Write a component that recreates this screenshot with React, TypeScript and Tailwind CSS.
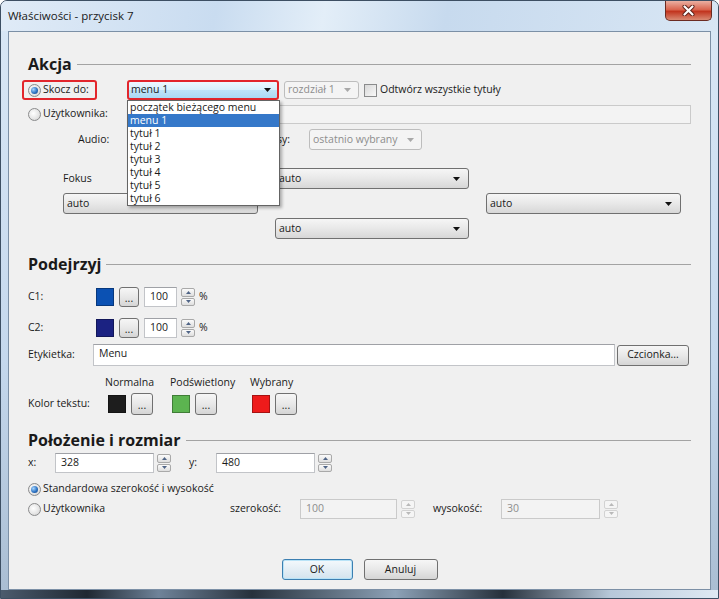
import React from "react";

const listItems = ["początek bieżącego menu", "menu 1", "tytuł 1", "tytuł 2", "tytuł 3", "tytuł 4", "tytuł 5", "tytuł 6"];

function Radio({ checked }: { checked?: boolean }) {
  return (
    <span className="flex h-[13px] w-[13px] shrink-0 items-center justify-center rounded-full border border-[#8a8b8c] bg-[radial-gradient(circle_at_40%_40%,#ffffff,#e4e4e4_60%,#c9c9c9)]">
      {checked && (
        <span className="h-[7px] w-[7px] rounded-full bg-[radial-gradient(circle_at_35%_35%,#a6d6ff,#2e74c4_55%,#143f7c)]" />
      )}
    </span>
  );
}

function Arrow({ color }: { color: string }) {
  return (
    <svg width="7" height="4" viewBox="0 0 7 4" className="shrink-0">
      <path d="M0 0H7L3.5 4Z" fill={color} />
    </svg>
  );
}

function Combo({ value, disabled, focus }: { value: string; disabled?: boolean; focus?: boolean }) {
  const box = focus
    ? "border-2 border-[#e2262c] bg-[linear-gradient(180deg,#eef8fe,#d6effc_50%,#bfe4f9_50%,#aad9f4)] pl-[2px] pr-[6px]"
    : disabled
      ? "border border-[#bdbdbd] bg-[#f4f4f4] text-[#8d8d8d] pl-[3px] pr-[7px]"
      : "border border-[#707070] bg-[linear-gradient(180deg,#f6f6f6,#e8e8e8_50%,#d7d7d7)] pl-[3px] pr-[8px]";
  return (
    <div className={`flex h-full w-full items-center rounded-[3px] ${box}`}>
      <span className="flex-1 whitespace-nowrap">{value}</span>
      <Arrow color={disabled ? "#a9a9a9" : "#111111"} />
    </div>
  );
}

function TextBox({ value, disabled, className }: { value?: string; disabled?: boolean; className?: string }) {
  const box = disabled
    ? "border-[#cacaca] bg-[#f3f3f3] text-[#8d8d8d]"
    : "border-[#c2c4c8] border-t-[#9fa1a6] bg-white";
  return <div className={`flex items-center border pl-[5px] ${box} ${className ?? ""}`}>{value}</div>;
}

function Spin({ disabled, className }: { disabled?: boolean; className?: string }) {
  const btn = disabled ? "border-[#d2d2d2] bg-[#f5f5f5]" : "border-[#a9a9a9] bg-[linear-gradient(180deg,#fbfbfb,#dedede)]";
  const fill = disabled ? "#b9b9b9" : "#4f6486";
  return (
    <div className={`flex h-[18px] w-[14px] flex-col gap-px ${className ?? ""}`}>
      <div className={`flex flex-1 items-center justify-center rounded-[2px] border ${btn}`}>
        <svg width="5" height="3" viewBox="0 0 5 3">
          <path d="M0 3L2.5 0L5 3Z" fill={fill} />
        </svg>
      </div>
      <div className={`flex flex-1 items-center justify-center rounded-[2px] border ${btn}`}>
        <svg width="5" height="3" viewBox="0 0 5 3">
          <path d="M0 0H5L2.5 3Z" fill={fill} />
        </svg>
      </div>
    </div>
  );
}

function Dots({ big, className }: { big?: boolean; className?: string }) {
  return (
    <div
      className={`flex items-center justify-center rounded-[3px] border border-[#707070] bg-[linear-gradient(180deg,#f6f6f6,#e8e8e8_50%,#d5d5d5)] pt-[3px] ${
        big ? "h-[22px] w-[22px]" : "h-[20px] w-[20px]"
      } ${className ?? ""}`}
    >
      ...
    </div>
  );
}

function Swatch({ color }: { color: string }) {
  return <div className="h-[18px] w-[18px] shrink-0 border border-black/30" style={{ backgroundColor: color }} />;
}

function Group({ title, className }: { title: string; className?: string }) {
  return (
    <div className={`flex h-[20px] items-center ${className ?? ""}`}>
      <span className="text-[16px] font-bold leading-[20px] text-[#1a1a1a]">{title}</span>
      <div className="ml-[5px] h-px flex-1 bg-[#a3a3a3]" />
    </div>
  );
}

function CloseButton() {
  return (
    <div className="flex h-[20px] w-[47px] items-center justify-center rounded-b-[5px] border border-t-0 border-[#6b2b22] bg-[linear-gradient(180deg,#eab0a2,#d9654f_45%,#c2351f_55%,#d98a73)]">
      <svg width="13" height="11" viewBox="0 0 13 11">
        <path d="M2.5 1.5L10.5 9.5M10.5 1.5L2.5 9.5" stroke="#5a1f16" strokeWidth="4" strokeLinecap="round" />
        <path d="M2.5 1.5L10.5 9.5M10.5 1.5L2.5 9.5" stroke="#ffffff" strokeWidth="2.2" strokeLinecap="round" />
      </svg>
    </div>
  );
}

export default function App() {
  return (
    <div className="h-[599px] w-[719px] bg-white font-['Open_Sans',sans-serif] text-[10.5px] text-[#1a1a1a]">
      <div className="flex h-full flex-col overflow-hidden rounded-t-[7px] border border-[#3d4f63] bg-[linear-gradient(180deg,#dae8f6,#c5d8ed_60%,#a9bdd2)]">
        <div className="flex h-[30px] shrink-0 items-start justify-between bg-[linear-gradient(100deg,#e0ebf7,#c9dcf0_30%,#e3eef8_45%,#c7daee_62%,#d8e6f4)] pl-[7px] pr-[6px]">
          <span className="mt-[7px] text-[11.5px] leading-[15px] text-[#1a1a1a]">Właściwości - przycisk 7</span>
          <CloseButton />
        </div>

        <div className="mx-[7px] flex flex-1 flex-col border border-[#7c90a6] bg-[#f0f0f0] px-[19px] pt-[22px]">
          <Group title="Akcja" />

          <div className="mt-[6px] flex h-[20px] items-center">
            <div className="-ml-[6px] flex h-[20px] w-[75px] items-center gap-[2px] rounded-[3px] border-2 border-[#e2262c] pl-[4px]">
              <Radio checked />
              <span className="whitespace-nowrap">Skocz do:</span>
            </div>
            <div className="relative ml-[30px] h-[20px] w-[152px]">
              <Combo value="menu 1" focus />
              <div className="absolute left-0 top-full z-10 w-[153px] border border-[#646464] bg-white shadow-[2px_2px_3px_rgba(0,0,0,0.3)]">
                {listItems.map((item) => (
                  <div
                    key={item}
                    className={
                      item === "menu 1"
                        ? "h-[13px] bg-[#3578c9] pl-[2px] leading-[13px] text-white"
                        : "h-[13px] pl-[2px] leading-[13px]"
                    }
                  >
                    {item}
                  </div>
                ))}
              </div>
            </div>
            <div className="ml-[5px] h-[18px] w-[75px]">
              <Combo value="rozdział 1" disabled />
            </div>
            <span className="ml-[5px] h-[13px] w-[13px] border border-[#8a8b8c] bg-[linear-gradient(135deg,#d8d8d8,#f9f9f9)]" />
            <span className="ml-[3px] whitespace-nowrap">Odtwórz wszystkie tytuły</span>
          </div>

          <div className="mt-[4px] flex h-[20px] items-center">
            <Radio />
            <span className="ml-[2px] w-[84px] whitespace-nowrap">Użytkownika:</span>
            <TextBox disabled className="h-[19px] flex-1" />
          </div>

          <div className="mt-[5px] flex h-[21px] items-center">
            <span className="ml-[50px] w-[49px]">Audio:</span>
            {/* audio combo sits under the open list */}
            <div className="h-[20px] w-[118px]">
              <Combo value="" />
            </div>
            <span className="w-[45px] text-right">Napisy:</span>
            <div className="ml-[19px] h-[21px] w-[113px]">
              <Combo value="ostatnio wybrany" disabled />
            </div>
          </div>

          <div className="ml-[35px] mt-[18px] grid grid-cols-[195px_194px_195px] grid-rows-[21px_21px_21px] gap-x-[17px] gap-y-[4px]">
            <div className="flex items-center">Fokus</div>
            <Combo value="auto" />
            <div />
            <Combo value="auto" />
            <div />
            <Combo value="auto" />
            <div />
            <Combo value="auto" />
            <div />
          </div>

          <Group title="Podejrzyj" className="mt-[15px]" />

          <div className="mt-[13px] flex h-[20px] items-center">
            <span className="w-[68px]">C1:</span>
            <Swatch color="#0b51b3" />
            <Dots className="ml-[5px]" />
            <TextBox value="100" className="ml-[5px] h-[20px] w-[33px]" />
            <Spin className="ml-[4px]" />
            <span className="ml-[4px]">%</span>
          </div>

          <div className="mt-[11px] flex h-[20px] items-center">
            <span className="w-[68px]">C2:</span>
            <Swatch color="#1b2282" />
            <Dots className="ml-[5px]" />
            <TextBox value="100" className="ml-[5px] h-[20px] w-[33px]" />
            <Spin className="ml-[4px]" />
            <span className="ml-[4px]">%</span>
          </div>

          <div className="mt-[6px] flex h-[22px] items-center">
            <span className="w-[65px]">Etykietka:</span>
            <TextBox value="Menu" className="h-[22px] w-[522px] items-start pt-[1px]" />
            <div className="ml-[2px] flex h-[21px] w-[72px] items-center justify-center rounded-[3px] border border-[#707070] bg-[linear-gradient(180deg,#f6f6f6,#e8e8e8_50%,#d5d5d5)]">
              Czcionka...
            </div>
          </div>

          <div className="mt-[10px] flex h-[14px] items-center pl-[77px]">
            <span className="w-[65px]">Normalna</span>
            <span className="w-[80px]">Podświetlony</span>
            <span>Wybrany</span>
          </div>

          <div className="mt-[3px] flex h-[22px] items-center">
            <span className="w-[80px]">Kolor tekstu:</span>
            <Swatch color="#1d1d1d" />
            <Dots big className="ml-[5px]" />
            <div className="ml-[19px]">
              <Swatch color="#5cb450" />
            </div>
            <Dots big className="ml-[5px]" />
            <div className="ml-[35px]">
              <Swatch color="#ee1b1b" />
            </div>
            <Dots big className="ml-[5px]" />
          </div>

          <Group title="Położenie i rozmiar" className="mt-[15px]" />

          <div className="mt-[3px] flex h-[20px] items-center">
            <span className="w-[27px]">x:</span>
            <TextBox value="328" className="h-[20px] w-[99px]" />
            <Spin className="ml-[3px]" />
            <span className="ml-[18px] w-[27px]">y:</span>
            <TextBox value="480" className="h-[20px] w-[99px]" />
            <Spin className="ml-[3px]" />
          </div>

          <div className="mt-[8px] flex h-[16px] items-center">
            <Radio checked />
            <span className="ml-[2px] whitespace-nowrap">Standardowa szerokość i wysokość</span>
          </div>

          <div className="mt-[2px] flex h-[20px] items-center">
            <div className="flex w-[202px] items-center">
              <Radio />
              <span className="ml-[2px]">Użytkownika</span>
            </div>
            <span className="w-[70px]">szerokość:</span>
            <TextBox value="100" disabled className="h-[20px] w-[97px]" />
            <Spin disabled className="ml-[4px]" />
            <span className="ml-[18px] w-[68px]">wysokość:</span>
            <TextBox value="30" disabled className="h-[20px] w-[99px]" />
            <Spin disabled className="ml-[4px]" />
          </div>

          <div className="mt-[40px] flex h-[21px] justify-center gap-[11px]">
            <div className="flex w-[71px] items-center justify-center rounded-[3px] border border-[#3c7fb1] bg-[linear-gradient(180deg,#f4f9fc,#e4eef5_50%,#d3e3ee)] shadow-[inset_0_0_0_1px_#b9e3f7]">
              OK
            </div>
            <div className="flex w-[74px] items-center justify-center rounded-[3px] border border-[#707070] bg-[linear-gradient(180deg,#f6f6f6,#e8e8e8_50%,#d5d5d5)]">
              Anuluj
            </div>
          </div>
        </div>

        <div className="h-[8px] shrink-0 bg-[linear-gradient(90deg,#4b5b6d,#1f2832_12%,#6f8399_22%,#27313c_35%,#8da2b7_55%,#26303b_70%,#b7c8d9_85%,#dfe9f3)]" />
      </div>
    </div>
  );
}
